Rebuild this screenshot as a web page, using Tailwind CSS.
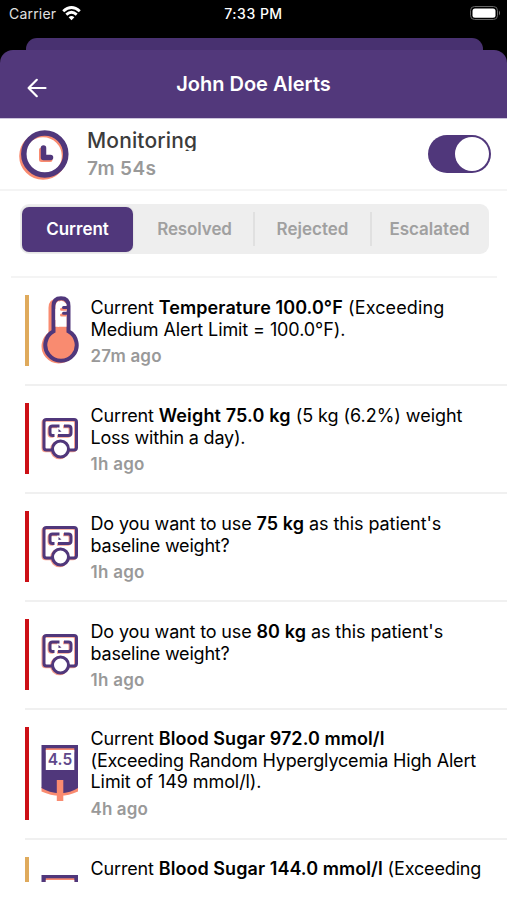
<!DOCTYPE html>
<html lang="en">
<head>
<meta charset="utf-8">
<title>John Doe Alerts</title>
<script src="https://cdn.jsdelivr.net/npm/@tailwindcss/browser@4"></script>
</head>
<body class="bg-white">
<svg class="hidden">
  <symbol id="scale" viewBox="0 0 38 43">
    <g fill="none" stroke="#f9a08c" stroke-width="3" transform="translate(-1 .8)">
      <path d="M11 33H5.500Q3 33 3 30.500V5Q3 2.500 5.500 2.500H33Q35.500 2.500 35.500 5V30.500Q35.500 33 33 33H28"/>
      <path d="M17 9H11.500Q9 9 9 11.500V16Q9 18.500 11.500 18.500H13.500M23 9H27.500Q30 9 30 11.500V16Q30 18.500 27.500 18.500H17"/>
      <circle cx="19.500" cy="32" r="8"/>
    </g>
    <g fill="none" stroke="#50377b" stroke-width="3">
      <path d="M11 33H5.500Q3 33 3 30.500V5Q3 2.500 5.500 2.500H33Q35.500 2.500 35.500 5V30.500Q35.500 33 33 33H28"/>
      <path d="M18.500 9H11.500Q9 9 9 11.500V16Q9 18.500 11.500 18.500H13.500M23 9H27.500Q30 9 30 11.500V16Q30 18.500 27.500 18.500H17"/>
      <circle cx="19.500" cy="32" r="8" fill="#fff"/>
      <path d="M17.500 12L20.500 14.500L17.500 15Z" fill="#50377b" stroke="none"/>
    </g>
  </symbol>
  <symbol id="meter" viewBox="0 0 38 58">
    <path d="M.5 43V47.500Q19 56 37 47.500V43Z" fill="#f98b70"/>
    <path d="M.5 1H37V44Q30 48.500 19 49.500Q8 48.500 .5 44Z" fill="#50377b"/>
    <rect x="4.800" y="4.300" width="28.500" height="4" fill="#f98b70"/>
    <rect x="4.800" y="6" width="28.500" height="20" fill="#fff"/>
    <rect x="15.800" y="36" width="6.500" height="21" fill="#f98b70"/>
    <text x="19" y="20.800" text-anchor="middle" font-family="Inter, sans-serif" font-size="15.500" font-weight="600" fill="#5f488a">4.5</text>
  </symbol>
</svg>
<div class="flex h-[900px] w-[507px] flex-col overflow-hidden bg-white font-['Inter',sans-serif] text-black">
  <header class="h-[118px] shrink-0 bg-black">
    <div class="grid h-[38px] grid-cols-3 items-start text-white">
      <div class="flex items-center gap-[6px] pt-[4px] pl-[9px] text-[14px] leading-[20px] text-[#e0e0e0]"><span class="tracking-[0.200px]">Carrier</span>
        <svg class="-mt-[2px] h-[15px] w-[19px]" viewBox="0 0 19 15" fill="none" stroke="#fff" stroke-width="2.800"><path d="M1.200 5.300Q9.500-2.200 17.800 5.300M4.300 8.600Q9.500 4 14.700 8.600"/><path d="M9.500 14.200L6.600 11.200Q9.500 8.900 12.400 11.200Z" fill="#fff" stroke="none"/></svg>
      </div>
      <div class="pt-[4px] text-center text-[14px] leading-[20px] font-medium tracking-[0.500px] whitespace-nowrap">7:33 PM</div>
      <svg class="mt-[5px] mr-[6px] h-[16px] w-[32px] justify-self-end" viewBox="0 0 32 16"><rect x="1.500" y="1.500" width="27" height="13" rx="4" fill="none" stroke="#666"/><rect x="3.500" y="3.500" width="23" height="9.300" rx="2.500" fill="#fff"/><path d="M30 5.500Q32 8 30 10.500Z" fill="#777"/></svg>
    </div>
    <div class="mr-[24px] ml-[26px] h-[12px] rounded-t-[11px] bg-[#483170]"></div>
    <div class="flex h-[68px] items-center rounded-t-[13px] bg-[#52387b] text-white">
      <svg class="mt-[8px] ml-[27px] h-[20px] w-[20px]" viewBox="0 0 20 20" fill="none" stroke="#fff" stroke-width="2.200" stroke-linecap="round" stroke-linejoin="round"><path d="M18.500 10H2M9.800 1.800L1.600 10L9.800 18.200"/></svg>
      <h1 class="mr-[47px] flex-1 text-center text-[20px] font-semibold whitespace-nowrap">John Doe Alerts</h1>
    </div>
  </header>

  <section class="flex h-[73px] shrink-0 items-center border-t border-b-2 border-t-[#cdc4dc] border-b-[#f4f4f4] pr-[16px] pl-[19px]">
    <svg class="mt-[2px] h-[50px] w-[50px]" viewBox="0 0 50 50" fill="none" stroke-linecap="round" stroke-linejoin="round"><circle cx="24" cy="26" r="21.300" stroke="#f98b70" stroke-width="5"/><path d="M22.500 20V29.500H31" stroke="#f98b70" stroke-width="5"/><circle cx="25.800" cy="24" r="21" stroke="#50377b" stroke-width="5.500"/><path d="M24.500 18V27.500H31.500" stroke="#50377b" stroke-width="5.500"/></svg>
    <div class="ml-[18px] flex-1">
      <div class="h-[24px] overflow-hidden text-[21px] leading-[27px] font-medium text-[#3c3c3c]"><span class="tracking-[0.150px]">Monitoring</span></div>
      <div class="mt-[5px] text-[19px] leading-[26px] font-semibold tracking-[0.400px] text-[#999]">7m 54s</div>
    </div>
    <div class="flex h-[38px] w-[63px] items-center justify-end rounded-full bg-[#50377b] pr-[2px]"><div class="h-[34px] w-[34px] rounded-full bg-white"></div></div>
  </section>

  <nav class="mt-[13px] mr-[18px] ml-[20px] flex h-[50px] shrink-0 items-center rounded-[9px] bg-[#eee] text-center text-[17px] font-semibold text-[#a0a0a0]">
    <div class="ml-[2px] flex h-[45px] w-[111px] items-center justify-center rounded-[7px] bg-[#50377b] pt-[2px] text-white shadow-[0_0_2px_#8885]"><span>Current</span></div>
    <div class="flex-1 pt-[2px] pl-[3px]"><span class="tracking-[-0.100px]">Resolved</span></div>
    <div class="flex h-[34px] w-[117px] items-center justify-center border-l-2 border-[#e0e0e0] pt-[2px]"><span>Rejected</span></div>
    <div class="flex h-[34px] w-[119px] items-center justify-center border-l-2 border-[#e0e0e0] pt-[2px] pr-[2px]"><span>Escalated</span></div>
  </nav>

  <main class="mt-[22px] h-[606px] shrink-0 overflow-hidden text-[18px] leading-[21.600px] whitespace-nowrap">
    <div class="mr-[10px] ml-[11px] h-[2px] bg-[#f4f4f4]"></div>
    <article class="ml-[25px] flex h-[108px] border-b-2 border-[#f0f0f0] pt-[17px] pb-[18px]">
      <div class="w-[4px] bg-[#dfaa5c]"></div>
      <svg class="ml-[12px] h-[72px] w-[38px]" viewBox="0 0 38 72"><path d="M9.500 12.500Q9.500 5 17 5H20Q27 5 27 12.500V38A15.700 15.700 0 1 1 9.500 38Z" transform="translate(-.5 .2)" fill="#f98b70" stroke="#f98b70" stroke-width="3"/><path d="M12.500 11Q12.500 3.300 20 3.300Q27.500 3.300 27.500 11V36.300A15.700 15.700 0 1 1 12.500 36.300Z" fill="#f98b70" stroke="#50377b" stroke-width="4"/><path d="M14.500 14Q17 13 17 8Q20 3 25.500 9V31.700H16.500V25H14.500Z" fill="#fff"/><path d="M14.500 12Q14.500 7 18 6V31.700H14.500Z" fill="#fff"/><path d="M26 12.800H22M26 18.600H22" stroke="#f98b70" stroke-width="3" stroke-linecap="round" transform="translate(-1.500 1.500)"/><path d="M27 12.500H22.500M27 18.300H22.500" stroke="#50377b" stroke-width="3" stroke-linecap="round"/></svg>
      <div class="ml-[11.500px] pt-[2px]"><p><span class="tracking-[-0.150px]">Current <b class="font-semibold tracking-[0.080px]">Temperature 100.0°F</b><span class="tracking-[0.120px]"> (Exceeding</span></span><br><span class="tracking-[-0.100px]">Medium Alert Limit = 100.0°F).</span></p><p class="mt-[6px] text-[17px] font-semibold tracking-[0.200px] text-[#999]"><span>27m ago</span></p></div>
    </article>
    <article class="ml-[25px] flex h-[108px] border-b-2 border-[#f0f0f0] pt-[17px] pb-[18px]">
      <div class="w-[4px] bg-[#cc1016]"></div>
      <svg class="mt-[14px] ml-[12px] h-[43px] w-[38px]"><use href="#scale"/></svg>
      <div class="ml-[11.500px] pt-[2px]"><p><span class="tracking-[-0.150px]">Current <b class="font-semibold tracking-[0.150px]">Weight 75.0 kg</b><span class="tracking-[-0.040px]"> (5 kg (6.2%) weight</span></span><br><span class="tracking-[-0.200px]">Loss within a day).</span></p><p class="mt-[6px] text-[17px] font-semibold tracking-[0.250px] text-[#999]"><span>1h ago</span></p></div>
    </article>
    <article class="ml-[25px] flex h-[108px] border-b-2 border-[#f0f0f0] pt-[17px] pb-[18px]">
      <div class="w-[4px] bg-[#cc1016]"></div>
      <svg class="mt-[14px] ml-[12px] h-[43px] w-[38px]"><use href="#scale"/></svg>
      <div class="ml-[11.500px] pt-[2px]"><p><span class="tracking-[-0.150px]">Do you want to use <b class="font-semibold tracking-[0.100px]">75 kg</b><span class="tracking-[-0.090px]"> as this patient's</span></span><br><span class="tracking-[-0.200px]">baseline weight?</span></p><p class="mt-[6px] text-[17px] font-semibold tracking-[0.250px] text-[#999]"><span>1h ago</span></p></div>
    </article>
    <article class="ml-[25px] flex h-[108px] border-b-2 border-[#f0f0f0] pt-[17px] pb-[18px]">
      <div class="w-[4px] bg-[#cc1016]"></div>
      <svg class="mt-[14px] ml-[12px] h-[43px] w-[38px]"><use href="#scale"/></svg>
      <div class="ml-[11.500px] pt-[2px]"><p><span class="tracking-[-0.150px]">Do you want to use <b class="font-semibold tracking-[0.100px]">80 kg</b><span class="tracking-[-0.090px]"> as this patient's</span></span><br><span class="tracking-[-0.200px]">baseline weight?</span></p><p class="mt-[6px] text-[17px] font-semibold tracking-[0.250px] text-[#999]"><span>1h ago</span></p></div>
    </article>
    <article class="ml-[25px] flex h-[130px] border-b-2 border-[#f0f0f0] pt-[17px] pb-[18px]">
      <div class="w-[4px] bg-[#cc1016]"></div>
      <svg class="mt-[17px] ml-[12px] h-[58px] w-[38px]"><use href="#meter"/></svg>
      <div class="ml-[11.500px] pt-[1px]"><p><span class="tracking-[-0.150px]">Current <b class="font-semibold tracking-[0.060px]">Blood Sugar 972.0 mmol/l</b></span><br><span class="tracking-[-0.170px]">(Exceeding Random Hyperglycemia High Alert</span><br><span class="tracking-[-0.080px]">Limit of 149 mmol/l).</span></p><p class="mt-[6px] text-[17px] font-semibold tracking-[0.100px] text-[#999]"><span>4h ago</span></p></div>
    </article>
    <article class="ml-[25px] flex h-[130px] pt-[17px] pb-[18px]">
      <div class="w-[4px] bg-[#dfaa5c]"></div>
      <svg class="mt-[17px] ml-[12px] h-[58px] w-[38px]"><use href="#meter"/></svg>
      <div class="ml-[11.500px] pt-[1px]"><p><span class="tracking-[-0.150px]">Current <b class="font-semibold tracking-[0.060px]">Blood Sugar 144.0 mmol/l</b><span> (Exceeding</span></span></p></div>
    </article>
  </main>
</div>
</body>
</html>
